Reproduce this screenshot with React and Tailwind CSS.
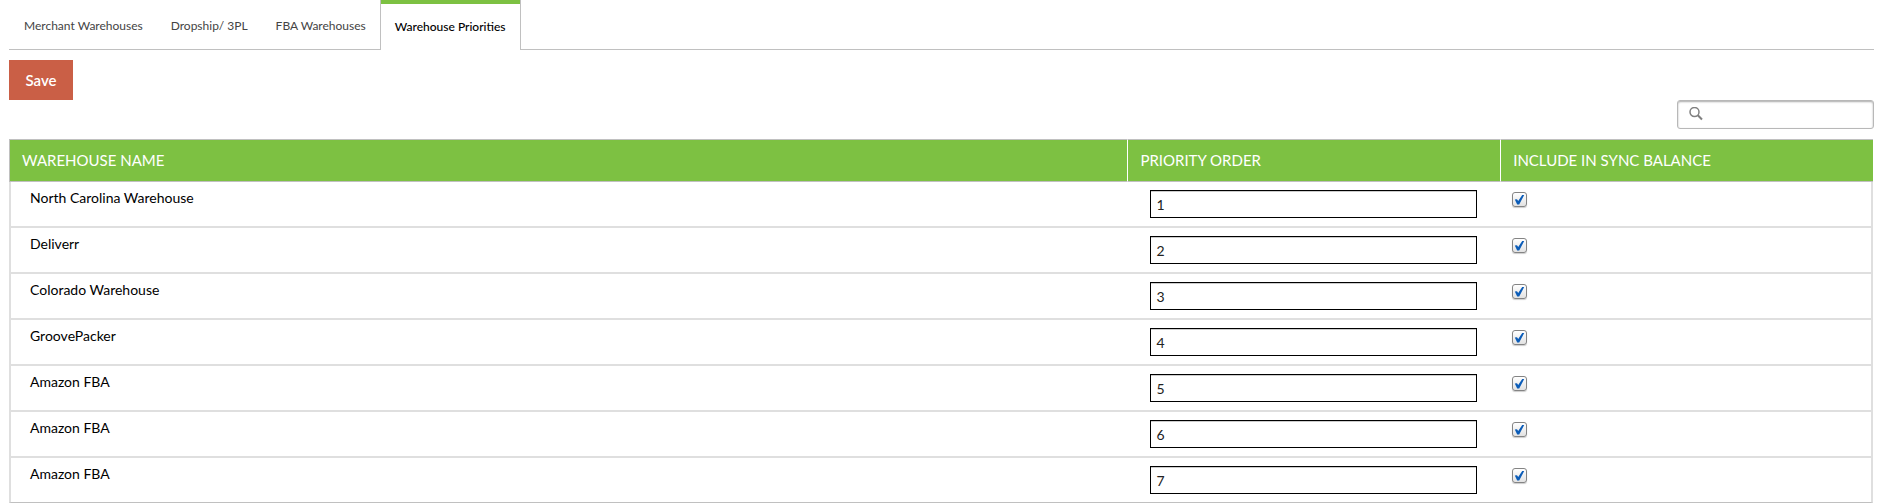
import { useState } from 'react';
import clsx from 'clsx';

const TABS = ['Merchant Warehouses', 'Dropship/ 3PL', 'FBA Warehouses', 'Warehouse Priorities'];

const WAREHOUSES = [
  { id: 1, name: 'North Carolina Warehouse', priority: '1', sync: true },
  { id: 2, name: 'Deliverr', priority: '2', sync: true },
  { id: 3, name: 'Colorado Warehouse', priority: '3', sync: true },
  { id: 4, name: 'GroovePacker', priority: '4', sync: true },
  { id: 5, name: 'Amazon FBA', priority: '5', sync: true },
  { id: 6, name: 'Amazon FBA', priority: '6', sync: true },
  { id: 7, name: 'Amazon FBA', priority: '7', sync: true },
];

function Tabs({ active, onChange }) {
  return (
    <nav className="flex h-[50px] border-b border-[#c0c0c0] pl-px text-[12px]">
      {TABS.map((tab) => (
        <a
          key={tab}
          href="#"
          aria-current={tab === active ? 'page' : undefined}
          onClick={(e) => {
            e.preventDefault();
            onChange(tab);
          }}
          className={clsx(
            'flex items-center px-[14px] pt-[3px]',
            tab === active
              ? '-mb-px border-x border-x-[#c0c0c0] bg-white bg-linear-to-r from-[#7dc142] to-[#7dc142] bg-[length:100%_4px] bg-no-repeat font-medium text-black'
              : 'text-[#444]'
          )}
        >
          {tab}
        </a>
      ))}
    </nav>
  );
}

function SearchBox({ value, onChange }) {
  return (
    <label className="flex h-[29px] w-[197px] items-start gap-2 rounded-[3px] border border-[#b8b8b8] bg-white pl-[11px] pt-[6px] shadow-[inset_0_1px_2px_#aaa]">
      <svg className="h-[14px] w-[14px] shrink-0" viewBox="0 0 14 14" fill="none" stroke="#808080">
        <circle cx="5.5" cy="5" r="4.5" strokeWidth="1.5" />
        <path d="M8.8 8.3 L13 12.5" strokeWidth="2" />
      </svg>
      <input
        type="text"
        aria-label="Search warehouses"
        value={value}
        onChange={(e) => onChange(e.target.value)}
        className="w-full bg-transparent text-[14px] leading-4 outline-none"
      />
    </label>
  );
}

function SyncCheckbox({ label, checked, onChange }) {
  return (
    <span className="relative block h-[15px] w-[15px]">
      <input
        type="checkbox"
        aria-label={label}
        checked={checked}
        onChange={(e) => onChange(e.target.checked)}
        className="block h-[15px] w-[15px] appearance-none rounded-[3px] border border-[#848484] bg-linear-to-b from-white to-[#e2e2e2] shadow-[0_1px_1px_#ccc]"
      />
      {checked && (
        <svg className="pointer-events-none absolute inset-0" width="15" height="15" viewBox="0 0 15 15">
          <path d="M2.8 7.4 L5 7.2 L6.2 9 L10.2 3 L12.2 3 L7.2 12.4 L5.2 12.4 Z" fill="#0b5cb8" />
        </svg>
      )}
    </span>
  );
}

export default function App() {
  const [tab, setTab] = useState('Warehouse Priorities');
  const [query, setQuery] = useState('');
  const [rows, setRows] = useState(WAREHOUSES);

  const update = (id, patch) => setRows(rows.map((r) => (r.id === id ? { ...r, ...patch } : r)));
  const visible = rows.filter((r) => r.name.toLowerCase().includes(query.toLowerCase()));

  return (
    <div className="bg-white pl-[9px] pr-[14px] font-[Lato,sans-serif] text-black">
      <Tabs active={tab} onChange={setTab} />

      <button type="button" className="mt-[10px] block h-10 w-16 bg-[#ca5f46] text-[15px] font-semibold text-white">
        Save
      </button>

      <div className="flex justify-end">
        <SearchBox value={query} onChange={setQuery} />
      </div>

      <div className="mt-[10px] pr-px">
        <table className="w-full table-fixed border-separate border-spacing-0 text-left text-[14px]">
          <thead>
            <tr className="h-[43px] bg-[#7dc142] text-[15px] text-white">
              <th className="w-[60%] border-y border-l border-[#c0c0c0] pl-3 font-normal">WAREHOUSE NAME</th>
              <th className="w-[20%] border-y border-l border-y-[#c0c0c0] border-l-white pl-3 font-normal">PRIORITY ORDER</th>
              <th className="w-[20%] border-y border-l border-y-[#c0c0c0] border-l-white pl-3 font-normal">INCLUDE IN SYNC BALANCE</th>
            </tr>
          </thead>
          <tbody className="[&>tr:last-child>td]:border-b [&>tr:last-child>td]:border-b-[#c0c0c0]">
            {visible.map((row) => (
              <tr key={row.id} className="align-top">
                <td className="border-b-2 border-l-2 border-[#dfdfdf] pl-[19px] pt-[6px] leading-5">{row.name}</td>
                <td className="border-b-2 border-[#dfdfdf] px-[23px] py-2">
                  <input
                    type="text"
                    aria-label={`Priority order for ${row.name}`}
                    value={row.priority}
                    onChange={(e) => update(row.id, { priority: e.target.value })}
                    className="block h-7 w-full border border-black bg-white px-[5px] text-[14px] text-[#222] shadow-[inset_0_1px_0_#ccc] outline-none"
                  />
                </td>
                <td className="border-b-2 border-r-2 border-[#dfdfdf] pl-3 pt-[10px]">
                  <SyncCheckbox
                    label={`Include ${row.name} in sync balance`}
                    checked={row.sync}
                    onChange={(sync) => update(row.id, { sync })}
                  />
                </td>
              </tr>
            ))}
          </tbody>
        </table>
      </div>
    </div>
  );
}
